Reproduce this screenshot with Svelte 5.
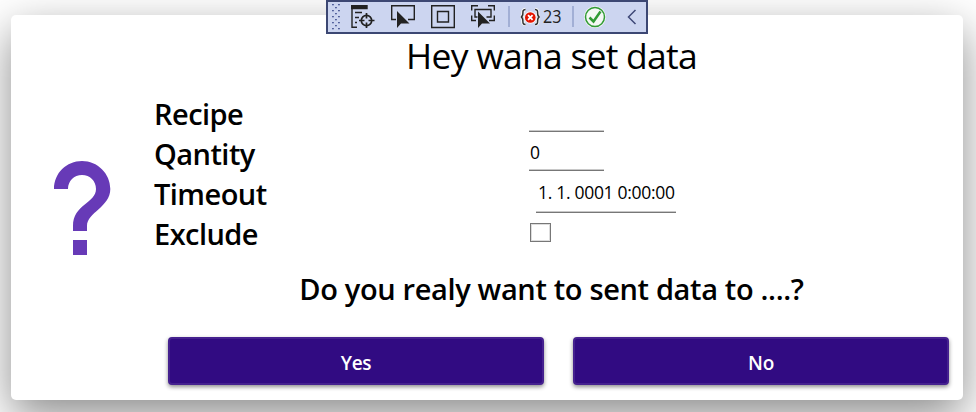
<script>
  const fields = ['Recipe', 'Qantity', 'Timeout', 'Exclude'];
  const gripDots = Array.from({ length: 9 }, (_, r) => (r % 2 ? [3] : [0, 6]).map((x) => ({ x, y: r * 3 }))).flat();
</script>

<main>
  <section class="card">
    <div class="mark">
      <svg width="58" height="96" viewBox="0 0 58 96">
        <path fill="#673ab7" d="M0 28C0 12 12.500 0 28 0S56.300 12.500 56.300 28C56.300 46 33 51.500 33 65V70H19V65C19 43.500 42 42 42 28C42 20 36 14 28 14S14 20 14 28ZM19 79H33V94H19Z" />
      </svg>
    </div>
    <div class="content">
      <h1>Hey wana set data</h1>
      <div class="form">
        <div class="labels">
          {#each fields as field}
            <div class="label">{field}</div>
          {/each}
        </div>
        <div class="values">
          <div class="input first"></div>
          <div class="input second">0</div>
          <div class="input time">1. 1. 0001 0:00:00</div>
          <div class="check"></div>
        </div>
      </div>
      <h2>Do you realy want to sent data to ....?</h2>
      <div class="buttons">
        <button>Yes</button>
        <button>No</button>
      </div>
    </div>
  </section>

  <div class="toolbar">
    <svg class="bar" width="316" height="28" viewBox="329 3 316 28" fill="none">
      <g fill="#52609c">
        {#each gripDots as d}
          <rect x={332 + d.x} y={4 + d.y} width="1.900" height="1.300" />
        {/each}
      </g>
      <g stroke="#222" stroke-width="1.400">
        <path fill="#222" d="M351.700 5.700H367V8.500H351.700Z" />
        <path d="M352 8V27.300H357M355 12.500H362M355 17.500H359M355 22.500H357" />
        <circle cx="366.500" cy="20.500" r="5.200" stroke-width="1.700" />
        <path stroke-width="1.700" d="M366.500 13V18.500M366.500 22.500V28M359 20.500H364.500M368.500 20.500H374.500" />
        <path d="M396 19.500H391.700V5.700H414.300V19.500H408" />
        <path fill="#222" stroke="none" d="M397 11V28L401 23.500H409.500Z" />
        <path d="M431.700 5.700H454.300V27.500H431.700ZM437.500 11.500H448.500V22H437.500Z" />
        <path d="M471.700 10.500V5.700H478M488 5.700H494.300V10.500M471.700 15.500V20.500H476M494.300 15.500V20.500H489M477.500 17H475V9.500H491V17H486.500" />
        <path fill="#222" stroke="none" d="M478 11.500V28L482 23.500H490Z" />
      </g>
      <path stroke="#94a2cc" stroke-width="1.500" d="M509 6V27M573 6V27" />
      <path stroke="#f7f7f7" stroke-width="3.500" d="M525.500 9.500C520.500 9.500 525 16 521 17C525 18 520.500 24.500 525.500 24.500M535 9.500C540 9.500 535.500 16 539.500 17C535.500 18 540 24.500 535 24.500" />
      <path stroke="#333" stroke-width="1.500" d="M525.500 9.500C520.500 9.500 525 16 521 17C525 18 520.500 24.500 525.500 24.500M535 9.500C540 9.500 535.500 16 539.500 17C535.500 18 540 24.500 535 24.500" />
      <circle cx="530.300" cy="17.500" r="6.200" fill="#f7f7f7" />
      <circle cx="530.300" cy="17.500" r="5.300" fill="#e51400" />
      <path stroke="#fff" stroke-width="1.800" d="M528 15.200L532.600 19.800M532.600 15.200L528 19.800" />
      <text x="543" y="23" textLength="18.500" lengthAdjust="spacingAndGlyphs">23</text>
      <circle cx="595" cy="17" r="10.800" fill="#f8f8f8" />
      <circle cx="595" cy="17" r="9.500" fill="#f4f8f4" stroke="#319b35" stroke-width="1.500" />
      <path stroke="#319b35" stroke-width="2.500" d="M589.500 17.500L593.500 21.500L600.500 11.500" />
      <path stroke="#3e4877" stroke-width="1.500" d="M635.500 10L628.500 17L635.500 24" />
    </svg>
  </div>
</main>

<style>
  :global(body) { background: #fff; overflow: hidden; }
  main {
    position: relative;
    box-sizing: border-box;
    width: 976px;
    height: 412px;
    padding: 14.500px 13px 12px 11px;
    overflow: hidden;
    font-family: "Open Sans", "Noto Sans", sans-serif;
    color: #000;
  }
  .card {
    display: flex;
    box-sizing: border-box;
    height: 385px;
    border-radius: 5px;
    background: #fff;
    box-shadow: 0 16px 46px rgba(0, 0, 0, .46);
  }
  .mark { flex: none; width: 143px; padding: 146.500px 0 0 43px; box-sizing: border-box; }
  .mark svg { display: block; }
  .content { width: 795px; }
  h1, h2 { margin: 0; text-align: center; white-space: nowrap; }
  h1 { height: 80px; line-height: 81px; font-size: 35.500px; font-weight: 400; letter-spacing: -.75px; }
  h2 { height: 71px; line-height: 67px; font-size: 29px; font-weight: 570; letter-spacing: -.35px; }
  .form { display: flex; height: 160px; }
  .labels { width: 375px; }
  .label { height: 40px; line-height: 38px; font-size: 29px; font-weight: 570; letter-spacing: -.55px; }
  .input {
    box-sizing: border-box;
    width: 75px;
    border-bottom: 1px solid #777;
    box-shadow: inset 0 -1px #c8c8c8;
    font-size: 17.500px;
    letter-spacing: -.3px;
    white-space: nowrap;
  }
  .first { height: 37.500px; }
  .second { height: 39px; padding-left: 1px; line-height: 41px; }
  .time { width: 140px; height: 42px; margin-left: 7px; padding-left: 2px; line-height: 42px; }
  .check { box-sizing: border-box; width: 21px; height: 19px; margin: 10px 0 0 1px; border: 1px solid #777; box-shadow: inset 0 0 0 1px #ddd; }
  .buttons { display: flex; gap: 29px; padding: 11px 0 0 14px; }
  button {
    box-sizing: border-box;
    width: 376px;
    height: 48px;
    padding: 5px 0 0;
    border: 2px solid #45218f;
    border-radius: 4px;
    background: #310b82;
    box-shadow: 0 2px 4px rgba(0, 0, 0, .45);
    color: #fff;
    font: 600 19px/1 "Open Sans", sans-serif;
    letter-spacing: -.3px;
  }
  .toolbar {
    position: absolute;
    top: 0;
    left: 326px;
    box-sizing: border-box;
    width: 322px;
    height: 34px;
    padding: 1px;
    border: 2px solid #3c4773;
    background: #ccd5f0;
  }
  .bar { display: block; }
  text { fill: #222; font-size: 17.500px; }
</style>
